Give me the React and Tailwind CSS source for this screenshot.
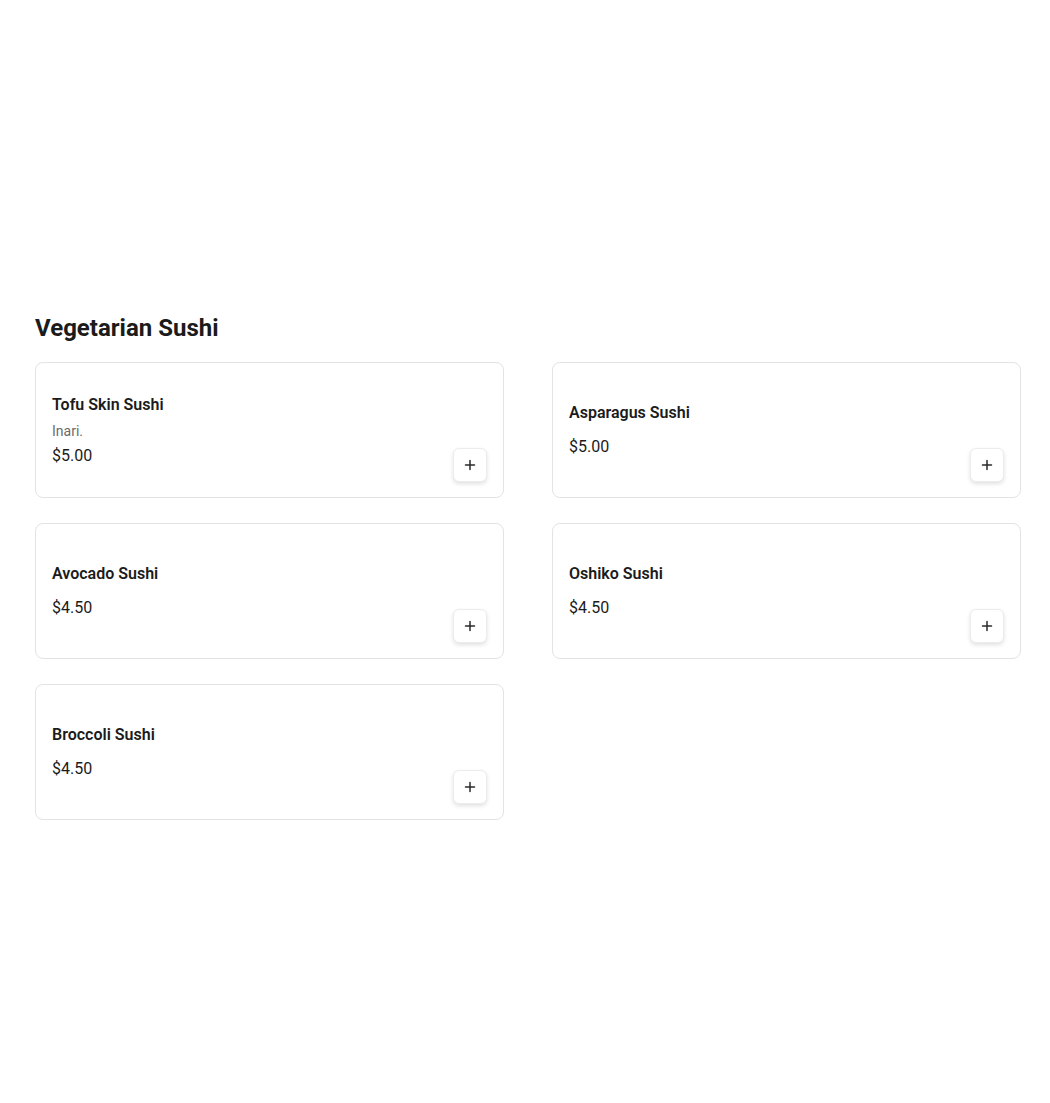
import React from 'react';

const items = [
  { name: 'Tofu Skin Sushi', desc: 'Inari.', price: '$5.00' },
  { name: 'Asparagus Sushi', price: '$5.00' },
  { name: 'Avocado Sushi', price: '$4.50' },
  { name: 'Oshiko Sushi', price: '$4.50' },
  { name: 'Broccoli Sushi', price: '$4.50' },
];

const PlusIcon = () => (
  <svg width="12" height="12" viewBox="0 0 12 12" fill="none" stroke="#2a2a2a" strokeWidth="1.5" strokeLinecap="round">
    <path d="M6 1.5v9M1.5 6h9" />
  </svg>
);

const MenuCard = ({ item }) => (
  <div className="relative h-[136px] flex items-center px-4 bg-white border border-[#e3e3e3] rounded-lg">
    <div className="flex flex-col">
      <h3 className="text-base leading-6 font-semibold text-[#1b1b1b]">{item.name}</h3>
      {item.desc && (
        <p className="mt-1 text-sm leading-5 text-[#6b6b6b]">{item.desc}</p>
      )}
      <p className={`${item.desc ? 'mt-[3px]' : 'mt-2.5'} text-base leading-6 text-[#1b1b1b]`}>
        {item.price}
      </p>
    </div>
    {/* add to cart */}
    <button className="absolute right-4 bottom-[15px] w-[34px] h-[34px] flex items-center justify-center bg-white border border-[#ececec] rounded-md shadow-[0_2px_4px_rgba(0,0,0,0.12)]">
      <PlusIcon />
    </button>
  </div>
);

const App = () => {
  return (
    <div className="min-h-[1103px] bg-white pt-[312px] pl-[35px]" style={{ fontFamily: 'Roboto, "Noto Sans", sans-serif' }}>
      <div className="w-[986px]">
        <h2 className="text-2xl leading-8 font-bold text-[#1b1b1b] mb-[18px]">Vegetarian Sushi</h2>
        <div className="grid grid-cols-2 gap-x-12 gap-y-[25px]">
          {items.map((item) => (
            <MenuCard key={item.name} item={item} />
          ))}
        </div>
      </div>
    </div>
  );
};

export default App;
